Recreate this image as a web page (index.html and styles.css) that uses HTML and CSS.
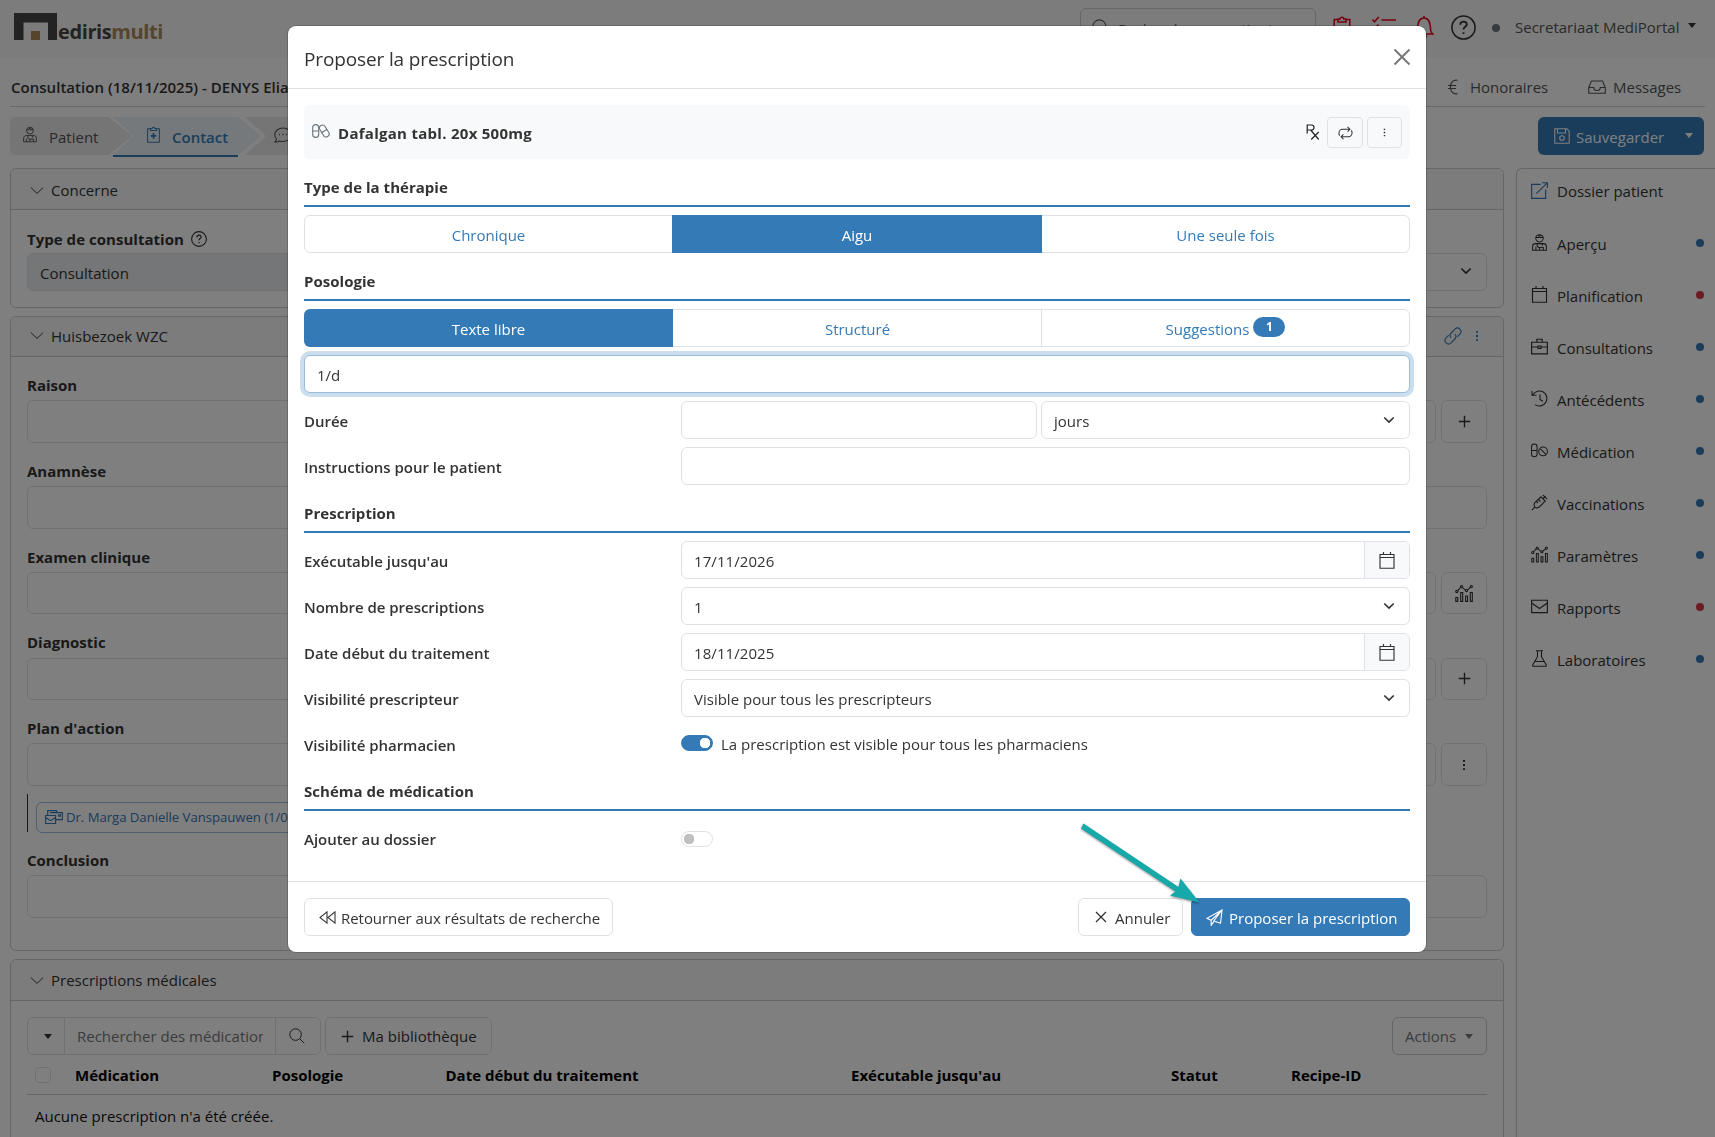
FILE: index.html
```html
<!DOCTYPE html>
<html lang="fr">
<head>
<meta charset="utf-8">
<title>Medirismulti - Consultation</title>
<link rel="stylesheet" href="styles.css">
</head>
<body>
<svg class="sprite" aria-hidden="true">
  <symbol id="i-person" viewBox="0 0 16 18"><circle cx="8" cy="4.6" r="3.9"/><path d="M4.2 3.6h7.6M6.5 2h3M.7 17.3v-4.1c0-1.800 1.300-3 3.100-3h8.400c1.800 0 3.100 1.200 3.100 3v4.100zM4.200 17v-3.500M5.500 10.300v2c0 1.200 1.200 2 2.500 2M11 10.300v2.200M8 14.300v3M8 14.300h4v3"/></symbol>
  <symbol id="i-clip" viewBox="0 0 14 18"><path d="M3.500 2.700H.7v14.600h12.600V2.700h-2.800M3.700 4.700V2.600h1.800a1.500 1.500 0 0 1 3 0h1.800v2.100z"/><path d="M7 7.500v6M4 10.500h6" stroke-width="1.800"/></symbol>
  <symbol id="i-chat" viewBox="0 0 18 16"><path d="M1 15c1-.8 1.500-1.900 1.300-3A6 6 0 0 1 .8 7.800C.8 4 4.300 1 9 1s8.200 3 8.200 6.800-3.500 6.700-8.200 6.700c-1.300 0-2.300-.2-3.300-.6C4.500 14.700 3 15.200 1 15z"/><path d="M5 7.500h1M8.500 7.500h1M12 7.500h1" stroke-width="1.500"/></symbol>
  <symbol id="i-chev" viewBox="0 0 16 9"><path d="M1 1.200l7 6.600 7-6.600"/></symbol>
  <symbol id="i-sel" viewBox="0 0 12 8"><path d="M1.300 1.500L6 6l4.700-4.500" stroke-width="1.700"/></symbol>
  <symbol id="i-help" viewBox="0 0 16 16"><circle cx="8" cy="8" r="7.400"/><path d="M5.900 6.300c0-1.300.9-2.100 2.100-2.100s2.100.8 2.100 1.900c0 1.500-2.100 1.500-2.100 3.200M8 11v1.200" stroke-width="1.200"/></symbol>
  <symbol id="i-search" viewBox="0 0 18 18"><circle cx="7.400" cy="7.400" r="6.500"/><path d="M12 12l5.200 5.200"/></symbol>
  <symbol id="i-plus" viewBox="0 0 14 14"><path d="M7 .8v12.400M.8 7h12.400" stroke-width="1.500"/></symbol>
  <symbol id="i-dots" viewBox="0 0 4 12"><path d="M1 1.800h2M1 6h2M1 10.200h2" stroke-width="1.800"/></symbol>
  <symbol id="i-link" viewBox="0 0 18 18"><path d="M7.200 10.800a3.400 3.400 0 0 1 0-4.800l3.700-3.900a3.400 3.400 0 0 1 5 5l-2.700 2.700M10.800 7.200a3.400 3.400 0 0 1 0 4.800l-3.700 3.900a3.400 3.400 0 0 1-5-5l2.700-2.700"/></symbol>
  <symbol id="i-euro" viewBox="0 0 10 16"><path d="M9.500 1.300C5 .5 2.500 3.500 2.500 8s2.500 7.500 7 6.700M0 6.500h8M0 9.500h8"/></symbol>
  <symbol id="i-inbox" viewBox="0 0 18 14"><path d="M.7 7.500L3.500 1h11l2.800 6.500v5.700H.7zM.7 7.500h5a3.300 3 0 0 0 6.600 0h5"/></symbol>
  <symbol id="i-save" viewBox="0 0 16 16"><path d="M.8.800h12l2.400 2.400v12H.8zM3.500 1v4h8V1"/><circle cx="8" cy="10" r="2.300"/></symbol>
  <symbol id="i-ext" viewBox="0 0 16 16"><path d="M9 2.200H.6v13.200h13.200V7M5 11L15 1M10.500.7h4.900v4.900"/></symbol>
  <symbol id="i-cal" viewBox="0 0 16 17"><path d="M1 2.500h14v13.700H1zM1 5.500h14M4.500 0v2.500M11.500 0v2.500" stroke-width="1.150"/></symbol>
  <symbol id="i-case" viewBox="0 0 16 15"><path d="M.6 3.500h14.800v10.900H.6zM5.500 3.500V.7h5v2.800M.6 8h6M9.400 8h6M6.600 7h2.800v2.300H6.600z"/></symbol>
  <symbol id="i-hist" viewBox="0 0 17 17"><path d="M1.800 4.800A7.500 7.500 0 1 1 4 14.600M1 1v4.200h4.500M9 4.500v5l3 1.700"/></symbol>
  <symbol id="i-pill" viewBox="0 0 18 15"><rect x=".6" y=".6" width="5.800" height="13.500" rx="2.900"/><path d="M.6 7.500h5.800M9.800 5.500l6 6"/><circle cx="12.800" cy="8.500" r="4.600"/></symbol>
  <symbol id="i-pills" viewBox="0 0 18 14"><rect x=".7" y=".6" width="6" height="12.800" rx="3"/><rect x="9.300" y=".6" width="6" height="12.800" rx="3" transform="rotate(-32 12.300 7)"/><path d="M.7 7h6M9.500 8.800l5.600-3.500"/></symbol>
  <symbol id="i-syr" viewBox="0 0 17 17"><path d="M.8 16.200l3-3M3.800 13.200c-1-2-.8-3.700.5-5l5.700-5.400 4.200 4.200-5.500 5.700c-1.300 1.300-3 1.500-4.900.5zM11.800 4.800l2.700-2.700M11.800.8l4.400 4.400M7.500 5.500l2 2M5.500 7.500l1.500 1.500"/></symbol>
  <symbol id="i-chart" viewBox="0 0 18 17"><path d="M.8 12.500h2v3.900h-2zM5.700 7.500h2v8.900h-2zM10.600 11h2v5.400h-2zM15.300 7.500h2v8.900h-2zM2.600 5.800l3-3.500M7.500 2.600l3 2.500M12.500 4.900l3-2.500"/><circle cx="1.800" cy="6.500" r="1.100"/><circle cx="6.600" cy="1.700" r="1.100"/><circle cx="11.500" cy="5.600" r="1.100"/><circle cx="16.300" cy="1.700" r="1.100"/></symbol>
  <symbol id="i-mail" viewBox="0 0 16 13"><path d="M.6.600h14.800v11.600H.6zM.6 3.200L8 8.400l7.400-5.200"/></symbol>
  <symbol id="i-flask" viewBox="0 0 16 17"><path d="M4.500.7h7M6 .7v6L1.200 15c-.3.700 0 1.300.8 1.300h12c.8 0 1.100-.6.800-1.300L10 6.700v-6M3.500 11.500h9"/></symbol>
  <symbol id="i-mails" viewBox="0 0 18 14"><path d="M.6 5.500h10v8H.6zM.6 7.500l5 3.200 5-3.200M2.700 5.500V.6h9v1.900M5 2.600h12.400v7h-6.500M13.700 4.700h1.800v1.600h-1.800z"/></symbol>
  <symbol id="i-clipred" viewBox="0 0 18 22"><path d="M5 3.500H1.200v17.700h15.600V3.500H13M5 6V3h2.200a1.800 1.800 0 0 1 3.600 0H13v3z" stroke-width="1.500"/></symbol>
  <symbol id="i-list" viewBox="0 0 24 20"><path d="M9.500 4H24M9.500 11H24M9.500 18H24M.5 3.500l2 2.200L6.800 1M.5 11l2 2 4-4.500" stroke-width="1.600"/></symbol>
  <symbol id="i-bell" viewBox="0 0 20 24"><path d="M10 1v2M3.500 14.500C3.500 8 4.500 3 10 3s6.500 5 6.500 11.500c0 2.300 1 3.500 2.500 4.500H1c1.500-1 2.500-2.200 2.500-4.500zM7.500 20.500c0 3 5 3 5 0" stroke-width="1.500"/></symbol>
  <symbol id="i-rx" viewBox="0 0 14 17"><path d="M1.200 9.500V1h4.300a2.500 2.500 0 0 1 0 5H1.200M4.700 6l8 9.500M12.700 8L5.200 15.500" stroke-width="1.200"/></symbol>
  <symbol id="i-loop" viewBox="0 0 16 14"><path d="M1.800 9.800A4.200 4.200 0 0 1 1 7.200C1 4.600 2.800 3 5 3h7.500M10.200.5L12.700 3l-2.500 2.500M14.200 4.200c.5.700.8 1.600.8 2.600 0 2.600-1.800 4.200-4 4.200H3.500M5.800 8.500L3.300 11l2.500 2.500"/></symbol>
  <symbol id="i-back" viewBox="0 0 17 13"><path d="M8 .9v11.200L1 6.500zM16 .9v11.200L9 6.500z"/></symbol>
  <symbol id="i-x" viewBox="0 0 12 12"><path d="M1 1l10 10M11 1L1 11" stroke-width="1.300"/></symbol>
  <symbol id="i-send" viewBox="0 0 17 17"><path d="M16 1L.9 9.300l4.300 2L16 1l-1.500 13.300-5-1.800M16 1L5.200 11.300v4.900l2.500-3.300M16 1L7.700 12l6.800 2.300"/></symbol>
</svg>

<div class="app">
  <header class="topbar">
    <div class="brand">
      <svg class="logo" viewBox="0 0 43 27"><path d="M0 0h43v27h-9V9.500H9.500V27H0z" fill="#474747"/><path d="M17 18h9v9h-9z" fill="#a88a58"/></svg>
      <span class="brand-a">ediris</span><span class="brand-b">multi</span>
    </div>
    <div class="top-right">
      <div class="top-search"><svg class="ic s18"><use href="#i-search"/></svg><span>Rechercher un patient</span></div>
      <svg class="ic red t-clip"><use href="#i-clipred"/></svg>
      <svg class="ic red t-list"><use href="#i-list"/></svg>
      <svg class="ic red t-bell"><use href="#i-bell"/></svg>
      <svg class="ic t-help"><use href="#i-help"/></svg>
      <i class="status"></i>
      <span class="user">Secretariaat MediPortal</span><i class="caret"></i>
    </div>
  </header>

  <div class="titlebar">
    <h1>Consultation (18/11/2025) - DENYS Elia</h1>
    <nav class="title-nav">
      <span class="nav-fee"><svg class="ic"><use href="#i-euro"/></svg>Honoraires</span>
      <span class="nav-msg"><svg class="ic"><use href="#i-inbox"/></svg>Messages</span>
    </nav>
  </div>

  <div class="steps">
    <div class="step first"><svg class="ic"><use href="#i-person"/></svg><span>Patient</span></div>
    <div class="step-wrap"><div class="step active"><svg class="ic"><use href="#i-clip"/></svg><span>Contact</span></div></div>
    <div class="step third"><svg class="ic"><use href="#i-chat"/></svg></div>
    <button class="save"><svg class="ic"><use href="#i-save"/></svg><span>Sauvegarder</span><i class="caret"></i></button>
  </div>

  <div class="columns">
    <main class="cards">
      <section class="card c1">
        <div class="card-head"><svg class="ic chev"><use href="#i-chev"/></svg><span>Concerne</span></div>
        <div class="card-body concerne">
          <div class="lbl">Type de consultation <svg class="ic"><use href="#i-help"/></svg></div>
          <div class="two"><div class="field disabled">Consultation</div><div class="field sel"><svg class="ic"><use href="#i-sel"/></svg></div></div>
        </div>
      </section>

      <section class="card c2">
        <div class="card-head"><svg class="ic chev"><use href="#i-chev"/></svg><span>Huisbezoek WZC</span><span class="tools"><svg class="ic s18"><use href="#i-link"/></svg><svg class="ic dots"><use href="#i-dots"/></svg></span></div>
        <div class="card-body">
          <div class="group"><div class="lbl">Raison</div><div class="line"><div class="area"></div><div class="sq"><svg class="ic s14"><use href="#i-plus"/></svg></div></div></div>
          <div class="group"><div class="lbl">Anamnèse</div><div class="line"><div class="area"></div></div></div>
          <div class="group"><div class="lbl">Examen clinique</div><div class="line"><div class="area"></div><div class="sq"><svg class="ic chart"><use href="#i-chart"/></svg></div></div></div>
          <div class="group"><div class="lbl">Diagnostic</div><div class="line"><div class="area"></div><div class="sq"><svg class="ic s14"><use href="#i-plus"/></svg></div></div></div>
          <div class="group"><div class="lbl">Plan d'action</div><div class="line"><div class="area"></div><div class="sq"><svg class="ic dots"><use href="#i-dots"/></svg></div></div>
            <div class="quote"><span class="chip"><svg class="ic"><use href="#i-mails"/></svg>Dr. Marga Danielle Vanspauwen (1/0)</span></div></div>
          <div class="group"><div class="lbl">Conclusion</div><div class="line"><div class="area"></div></div></div>
        </div>
      </section>

      <section class="card c3">
        <div class="card-head"><svg class="ic chev"><use href="#i-chev"/></svg><span>Prescriptions médicales</span></div>
        <div class="card-body">
          <div class="toolbar">
            <div class="combo"><div class="drop"><i class="caret"></i></div><div class="query"><span>Rechercher des médications</span></div><div class="find"><svg class="ic"><use href="#i-search"/></svg></div></div>
            <div class="btn lib"><svg class="ic s14"><use href="#i-plus"/></svg>Ma bibliothèque</div>
            <div class="btn actions">Actions<i class="caret"></i></div>
          </div>
          <div class="thead"><span><i class="check"></i></span><span>Médication</span><span>Posologie</span><span>Date début du traitement</span><span>Exécutable jusqu'au</span><span>Statut</span><span>Recipe-ID</span></div>
          <div class="empty">Aucune prescription n'a été créée.</div>
        </div>
      </section>
    </main>

    <aside class="side">
      <div class="item top"><svg class="ic blue"><use href="#i-ext"/></svg>Dossier patient</div>
      <div class="item"><svg class="ic"><use href="#i-person"/></svg>Aperçu<i class="dot"></i></div>
      <div class="item"><svg class="ic"><use href="#i-cal"/></svg>Planification<i class="dot bad"></i></div>
      <div class="item"><svg class="ic"><use href="#i-case"/></svg>Consultations<i class="dot"></i></div>
      <div class="item"><svg class="ic"><use href="#i-hist"/></svg>Antécédents<i class="dot"></i></div>
      <div class="item"><svg class="ic"><use href="#i-pill"/></svg>Médication<i class="dot"></i></div>
      <div class="item"><svg class="ic"><use href="#i-syr"/></svg>Vaccinations<i class="dot"></i></div>
      <div class="item"><svg class="ic"><use href="#i-chart"/></svg>Paramètres<i class="dot"></i></div>
      <div class="item"><svg class="ic"><use href="#i-mail"/></svg>Rapports<i class="dot bad"></i></div>
      <div class="item"><svg class="ic"><use href="#i-flask"/></svg>Laboratoires<i class="dot"></i></div>
    </aside>
  </div>
</div>

<div class="backdrop">
  <div class="modal" role="dialog">
    <div class="modal-head"><h2>Proposer la prescription</h2><svg class="ic close"><use href="#i-x"/></svg></div>
    <div class="modal-body">
      <div class="drug">
        <svg class="ic pills"><use href="#i-pills"/></svg><strong>Dafalgan tabl. 20x 500mg</strong>
        <svg class="ic rx"><use href="#i-rx"/></svg>
        <div class="mini wide"><svg class="ic loop"><use href="#i-loop"/></svg></div>
        <div class="mini"><svg class="ic mdots"><use href="#i-dots"/></svg></div>
      </div>
      <h3>Type de la thérapie</h3>
      <div class="seg mid"><div>Chronique</div><div class="on">Aigu</div><div>Une seule fois</div></div>
      <h3>Posologie</h3>
      <div class="seg"><div class="on">Texte libre</div><div>Structuré</div><div>Suggestions<b class="badge">1</b></div></div>
      <div class="field focus">1/d</div>
      <div class="row"><label>Durée</label><div class="dur"><div class="field"></div><div class="field sel">jours<svg class="ic"><use href="#i-sel"/></svg></div></div></div>
      <div class="row"><label>Instructions pour le patient</label><div class="field"></div></div>
      <h3>Prescription</h3>
      <div class="row"><label>Exécutable jusqu'au</label><div class="field date"><b>17/11/2026</b><span><svg class="ic"><use href="#i-cal"/></svg></span></div></div>
      <div class="row"><label>Nombre de prescriptions</label><div class="field sel">1<svg class="ic"><use href="#i-sel"/></svg></div></div>
      <div class="row"><label>Date début du traitement</label><div class="field date"><b>18/11/2025</b><span><svg class="ic"><use href="#i-cal"/></svg></span></div></div>
      <div class="row"><label>Visibilité prescripteur</label><div class="field sel">Visible pour tous les prescripteurs<svg class="ic"><use href="#i-sel"/></svg></div></div>
      <div class="row"><label>Visibilité pharmacien</label><div class="switch-line"><i class="switch on"></i>La prescription est visible pour tous les pharmaciens</div></div>
      <h3>Schéma de médication</h3>
      <div class="row"><label>Ajouter au dossier</label><div class="switch-line"><i class="switch off"></i></div></div>
    </div>
    <div class="modal-foot">
      <div class="btn back"><svg class="ic"><use href="#i-back"/></svg><span>Retourner aux résultats de recherche</span></div>
      <div class="btn cancel"><svg class="ic"><use href="#i-x"/></svg><span>Annuler</span></div>
      <div class="btn primary"><svg class="ic"><use href="#i-send"/></svg><span>Proposer la prescription</span></div>
    </div>
  </div>
  <svg class="pointer" viewBox="0 0 130 90"><path d="M4.500 1.500L99.500 65l2-8.500 19 24-29.500-7 5.500-4L2 6.500z"/></svg>
</div>
</body>
</html>
```

FILE: styles.css
```css
* { box-sizing: border-box; }
body {
  margin: 0; height: 1137px; overflow: hidden; background: #fff; color: #333;
  font: 15px/24px "Open Sans", "Noto Sans", sans-serif;
}
h1, h2, h3 { margin: 0; }
.sprite { position: absolute; width: 0; height: 0; }
.ic { width: 16px; height: 16px; fill: none; stroke: currentColor; stroke-width: 1.1; flex: none; }
.s18 { width: 18px; height: 18px; }
.s14 { width: 13px; height: 13px; }
.red { color: #f00020; }
.blue { color: #337ab7; }
.caret { flex: none; border: 4.500px solid transparent; border-top: 5px solid currentColor; border-bottom: 0; width: 0; height: 0; }

/* page */
.app { height: 1137px; overflow: hidden; }
.topbar { height: 58px; background: #f8f8f8; display: flex; justify-content: space-between; padding: 0 19px 0 14px; }
.brand { display: flex; align-items: flex-start; padding-top: 13px; font-weight: 700; font-size: 20px; letter-spacing: -.4px; }
.brand span { line-height: 24px; padding-top: 7px; }
.logo { width: 43px; height: 27px; margin-right: 1px; }
.brand-a { color: #474747; }
.brand-b { color: #a88a58; }
.top-right { display: flex; align-items: flex-start; }
.top-search { width: 236px; height: 40px; margin: 8px 14px 0 0; border: 1px solid #ccc; border-radius: 6px; display: flex; align-items: center; gap: 8px; padding: 0 11px; color: #666; }
.top-search span { padding-top: 2px; }
.t-clip { width: 18px; height: 22px; margin: 16px 21px 0 3px; }
.t-list { width: 24px; height: 20px; margin-top: 16px; }
.t-bell { width: 20px; height: 24px; margin: 15px 0 0 18px; }
.t-help { width: 25px; height: 25px; margin: 15px 0 0 17px; stroke-width: 1; }
.status { width: 8px; height: 8px; border-radius: 50%; background: #6c757d; margin: 24px 15px 0 16px; }
.user { line-height: 24px; margin-top: 15px; width: 165px; white-space: nowrap; color: #555; }
.topbar .caret { margin: 23px 0 0 8px; }
.titlebar { margin: 0 10px; height: 49px; border-bottom: 1px solid #d2d2d2; display: flex; justify-content: space-between; padding: 17px 23px 0 1px; }
h1 { font: 600 15px/24px "Open Sans", "Noto Sans", sans-serif; letter-spacing: .03px; color: #333; }
.title-nav { display: flex; color: #555; }
.title-nav span { display: flex; align-items: center; height: 24px; }
.nav-fee { width: 140px; gap: 12px; }
.nav-fee .ic { width: 10px; }
.nav-msg { width: 94px; gap: 7px; }
.nav-msg .ic { width: 18px; height: 14px; }
.steps { display: flex; height: 61px; padding: 10px 11px 0 10px; color: #555; }
.step { height: 38px; display: flex; align-items: center; background: #ebebeb; }
.step span { padding-top: 1px; }
.first { width: 122px; margin-right: -20px; padding-left: 13px; gap: 12px; border-radius: 5px 0 0 5px; clip-path: polygon(0 0, 99px 0, 100% 50%, 99px 100%, 0 100%); }
.first .ic { width: 14px; height: 17px; margin-top: -3px; }
.step-wrap { height: 40px; width: 149px; margin-right: -16px; background: linear-gradient(#337ab7, #337ab7) 1px 38px / 125px 2px no-repeat; }
.active { width: 149px; color: #337ab7; font-weight: 600; background: #ebf3f8; padding-left: 35px; gap: 12px; clip-path: polygon(1px 0, 126px 0, 100% 50%, 126px 100%, 1px 100%, 21px 50%); }
.active .ic { width: 13px; height: 17px; margin-top: -3px; }
.third { width: 100px; padding-left: 29px; clip-path: polygon(0 0, 100% 0, 100% 100%, 0 100%, 21px 50%); }
.third .ic { width: 18px; margin-top: -2px; }
.save { margin-left: auto; width: 166px; height: 38px; border: 0; border-radius: 6px; background: #337ab7; color: #fff; font: inherit; display: flex; align-items: center; padding: 0 10px 0 16px; }
.save span { width: 88px; margin: 1px 21px 0 6px; text-align: left; letter-spacing: .02px; }
.save .caret { margin-top: -1px; }
.columns { display: grid; grid-template-columns: 1494px 1fr; column-gap: 12px; margin-left: 10px; }
.card { border: 1px solid #ccc; border-radius: 6px; margin-bottom: 8px; }
.c1 { height: 140px; }
.c2 { height: 635px; }
.c3 { height: 260px; }
.card-head { height: 41px; background: #f8f8f8; border-bottom: 1px solid #ccc; border-radius: 5px 5px 0 0; display: flex; align-items: center; padding: 2px 0 0 19px; }
.c2 .card-head { height: 40px; padding-top: 0; }
.c2 .card-head > span { margin-top: -1px; }
.c3 .card-head { padding-top: 0; }
.chev { width: 14px; height: 9px; margin-right: 7px; }
.c2 .chev { margin-top: -2px; }
.tools { margin-left: auto; display: flex; align-items: center; gap: 13px; padding-right: 24px; color: #337ab7; }
.dots { width: 4px; height: 12px; }
.card-body { padding: 16px 16px 0; }
.lbl { font-weight: 700; height: 24px; margin-bottom: 3.250px; display: flex; align-items: center; }
.concerne { padding-top: 17px; }
.concerne .lbl { margin-bottom: 2px; letter-spacing: .03px; }
.concerne .lbl .ic { margin-left: 7px; }
.two { display: grid; grid-template-columns: 1fr 1fr; gap: 16px; }
.field { height: 38px; border: 1px solid #dee2e6; border-radius: 6px; padding: 1px 12px 0; display: flex; align-items: center; background: #fff; white-space: nowrap; }
.disabled { background: #e9ecef; }
.sel .ic { width: 12px; height: 8px; margin: -3px 2px 0 auto; }
.group { margin-bottom: 16px; }
.line { display: flex; gap: 5px; height: 42.500px; }
.area { flex: 1; border: 1px solid #dee2e6; border-radius: 6px; }
.sq { width: 46px; border: 1px solid #dee2e6; border-radius: 6px; display: flex; align-items: center; justify-content: center; }
.chart { width: 18px; height: 17px; }
.quote { margin-top: 8px; height: 38px; border-left: 1px solid #333; padding: 8px 0 0 8px; }
.chip { display: inline-flex; align-items: center; height: 31px; border: 1px solid #9dbfde; border-radius: 6px; padding: 0 8px; gap: 3px; color: #337ab7; font-size: 13.200px; letter-spacing: -.05px; }
.chip .ic { width: 18px; height: 14px; }
.toolbar { display: flex; height: 38px; }
.combo { display: flex; width: 294px; border: 1px solid #dee2e6; border-radius: 6px; margin-right: 4px; }
.combo > div { display: flex; align-items: center; }
.drop { width: 36px; padding-left: 16px; }
.query { width: 212px; border: solid #dee2e6; border-width: 0 1px; padding: 0 12px; color: #777; }
.query span { overflow: hidden; white-space: nowrap; }
.find { padding-left: 13px; }
.btn { height: 38px; border: 1px solid #dee2e6; border-radius: 6px; display: flex; align-items: center; white-space: nowrap; }
.lib { width: 167px; padding-left: 15px; gap: 8px; letter-spacing: .03px; }
.actions { margin-left: auto; width: 95px; padding-left: 12px; gap: 9px; border-color: #ccc; color: #777; }
.thead { display: grid; grid-template-columns: 48px 197px 173.500px 405.500px 320px 120px 1fr; height: 40px; border-bottom: 1px solid #ccc; font-weight: 700; color: #000; align-items: center; }
.check { display: block; width: 16px; height: 16px; margin: 0 0 0 8px; border: 1px solid #dee2e6; border-radius: 4px; }
.empty { padding: 9px 8px; color: #111; }
.side { border: 1px solid #ccc; border-right: 0; border-radius: 6px 0 0; }
.item { height: 52px; display: grid; grid-template-columns: 40px 1fr 20px; align-items: center; }
.item .ic { margin: -4px 0 0 14px; width: 17px; height: 17px; justify-self: start; }
.item.top { height: 43px; margin-bottom: 6px; }
.item.top .ic { margin-top: -1px; }
.dot { width: 8px; height: 8px; border-radius: 50%; background: #337ab7; margin: -3px 0 0 1px; }
.dot.bad { background: #dc3545; }

/* dialog */
.backdrop { position: fixed; inset: 0; background: rgba(0, 0, 0, .5); padding: 26px 289px 0 288px; }
.modal { height: 926px; background: #fff; border-radius: 8px; box-shadow: 0 0 0 1px rgba(0, 0, 0, .17); display: flex; flex-direction: column; }
.modal-head { height: 63px; border-bottom: 1px solid #dee2e6; display: flex; justify-content: space-between; align-items: center; padding: 4px 16px 0; }
h2 { font: 400 19px/30px "Open Sans", "Noto Sans", sans-serif; letter-spacing: -.13px; }
.close { width: 18px; height: 18px; color: #777; margin: -4px -1px 0 0; }
.modal-body { flex: 1; padding: 16px 16px 0; display: flex; flex-direction: column; gap: 8px; }
.drug { height: 54px; flex: none; background: #f8f9fa; border-radius: 6px; display: flex; align-items: center; padding: 0 8px; }
.drug strong { margin: 2px auto 0 8px; letter-spacing: .28px; }
.pills { width: 18px; height: 14px; margin-top: -2px; color: #6c757d; }
.rx { width: 14px; height: 17px; margin-right: 7px; color: #222; }
.mini { width: 35px; height: 31px; margin-top: 1px; border: 1px solid #dee2e6; border-radius: 4px; display: flex; align-items: center; justify-content: center; }
.wide { width: 36px; margin-right: 4px; }
.loop { width: 15px; height: 14px; }
.mdots { width: 3px; height: 9px; }
h3 { height: 40px; flex: none; border-bottom: 2px solid #337ab7; font: 700 15px/38px "Open Sans", "Noto Sans", sans-serif; letter-spacing: .03px; padding-top: 1px; }
.seg { display: grid; grid-template-columns: 368px 369px 1fr; height: 38px; flex: none; border: 1px solid #dee2e6; border-radius: 6px; color: #337ab7; line-height: 38px; text-align: center; }
.seg.mid { grid-template-columns: 367px 370px 1fr; }
.seg > div { height: 38px; margin: -1px 0; padding-top: 1px; }
.seg > div + div { border-left: 1px solid #dee2e6; }
.seg > div:last-child { margin-left: -1px; }
.seg.mid > div:last-child { margin-left: 0; }
.seg .on, .seg > .on + div { border-left: 0; }
.seg .on { background: #337ab7; color: #fff; }
.seg .on:first-child { border-radius: 6px 0 0 6px; margin-left: -1px; }
.badge { display: inline-block; width: 32px; height: 20px; margin-left: 4px; border-radius: 10px; background: #337ab7; color: #fff; font-size: 12px; line-height: 20px; position: relative; top: -4px; vertical-align: middle; }
.focus { flex: none; border-color: #99bddb; box-shadow: 0 0 0 4px #ccdeed; }
.row { display: grid; grid-template-columns: 377px 1fr; height: 38px; flex: none; align-items: center; }
label { font-weight: 600; padding-top: 1px; letter-spacing: -.02px; }
.dur { display: grid; grid-template-columns: 356px 369px; gap: 4px; }
.modal .sel .ic { margin-top: -2px; }
.date { padding-right: 0; padding-top: 0; overflow: hidden; }
.date b { font-weight: 400; padding-top: 2px; letter-spacing: .08px; }
.date span { margin-left: auto; width: 45px; height: 36px; background: #f8f9fa; border-left: 1px solid #dee2e6; display: flex; align-items: center; justify-content: center; }
.date .ic { height: 17px; margin-top: 0; }
.switch-line { display: flex; align-items: center; gap: 8px; }
.switch { width: 32px; height: 16px; border-radius: 8px; border: 1px solid #dee2e6; background: radial-gradient(circle at 7px 7px, #bfbfbf 5px, transparent 5.500px); margin-top: -2px; }
.switch.on { border-color: #337ab7; background: radial-gradient(circle at 23px 7px, #fff 5px, #337ab7 5.500px); }
.switch.off { margin-top: 2px; }
.modal-foot { height: 71px; border-top: 1px solid #dee2e6; display: flex; align-items: center; padding: 0 16px; }
.btn span { padding-top: 1px; }
.back { width: 309px; padding-left: 14px; gap: 5px; margin-right: auto; letter-spacing: -.05px; }
.back .ic { width: 17px; height: 13px; }
.cancel { width: 105px; padding-left: 16px; gap: 8px; margin-right: 8px; }
.cancel .ic { width: 12px; height: 12px; }
.primary { width: 219px; padding-left: 14px; gap: 6px; background: #337ab7; border-color: #337ab7; color: #fff; }
.primary .ic { width: 17px; height: 17px; }
.pointer { position: absolute; left: 1079px; top: 822px; width: 130px; height: 90px; fill: #15a9a9; filter: drop-shadow(0 1px 1px rgba(0, 0, 0, .45)); }
```
